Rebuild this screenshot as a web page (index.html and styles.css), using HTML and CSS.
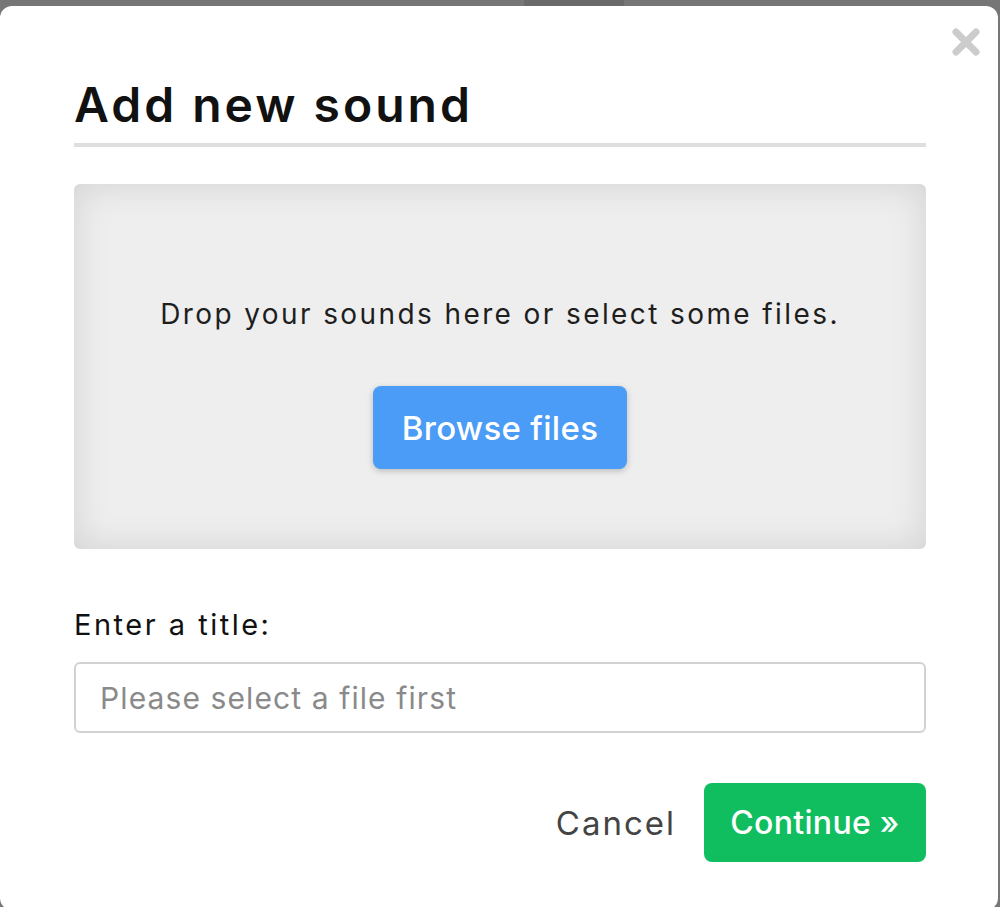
FILE: index.html
```html
<!DOCTYPE html>
<html lang="en">
<head>
<meta charset="utf-8">
<title>Add new sound</title>
<link rel="stylesheet" href="styles.css">
</head>
<body>
<div class="backdrop"><span class="backdrop-tab"></span></div>
<div class="modal">
  <button class="close" aria-label="Close">
    <svg width="34" height="32" viewBox="0 0 34 32"><path d="M7 6 L27 26 M27 6 L7 26" stroke="#cccccc" stroke-width="7" stroke-linecap="round"/></svg>
  </button>
  <h1 class="modal-title">Add new sound</h1>
  <div class="dropzone">
    <p class="drop-text">Drop your sounds here or select some files.</p>
    <button class="btn btn-browse">Browse files</button>
  </div>
  <label class="field-label" for="title">Enter a title:</label>
  <input class="field-input" id="title" type="text" placeholder="Please select a file first">
  <div class="actions">
    <button class="btn-cancel">Cancel</button>
    <button class="btn btn-continue">Continue »</button>
  </div>
</div>
</body>
</html>
```
FILE: styles.css
```css
html, body {
  margin: 0;
  padding: 0;
}
body {
  background: #767676;
  overflow: hidden;
  height: 907px;
  font-family: Inter, "Open Sans", sans-serif;
}
.backdrop {
  height: 6px;
  display: flex;
}
.backdrop-tab {
  margin-left: 524px;
  width: 100px;
  background: #6a6a6a;
}
.modal {
  position: relative;
  box-sizing: border-box;
  width: 998px;
  height: 904px;
  background: #fff;
  border-radius: 12px;
  padding: 0 72px 0 74px;
  overflow: hidden;
}
.close {
  position: absolute;
  top: 20px;
  right: 15px;
  border: 0;
  background: none;
  padding: 0;
  width: 34px;
  height: 32px;
}
.close svg { display: block; }
.modal-title {
  margin: 0;
  padding-top: 71px;
  padding-bottom: 10px;
  font-size: 48px;
  line-height: 56px;
  font-weight: 600;
  letter-spacing: 3px;
  color: #111;
  border-bottom: 4px solid #dedede;
}
.dropzone {
  margin-top: 37px;
  height: 365px;
  box-sizing: border-box;
  background: #eeeeee;
  border-radius: 6px;
  box-shadow: inset 0 0 36px rgba(0,0,0,0.12);
  padding-top: 110px;
  text-align: center;
}
.drop-text {
  margin: 0;
  font-size: 28px;
  line-height: 40px;
  letter-spacing: 2.4px;
  color: #1e1e1e;
}
.btn {
  border: 0;
  font-family: inherit;
  color: #fff;
  border-radius: 8px;
  cursor: pointer;
}
.btn-browse {
  margin-top: 52px;
  width: 254px;
  height: 83px;
  background: #4a9cf6;
  font-size: 33px;
  font-weight: 500;
  letter-spacing: 0.3px;
  box-shadow: 0 2px 6px rgba(0,0,0,0.22);
}
.field-label {
  display: block;
  margin-top: 56px;
  font-size: 29px;
  line-height: 40px;
  letter-spacing: 2.5px;
  color: #111;
}
.field-input {
  display: block;
  margin-top: 17px;
  box-sizing: border-box;
  width: 100%;
  height: 71px;
  border: 2px solid #d2d2d2;
  border-radius: 6px;
  padding: 0 24px;
  font-family: inherit;
  font-size: 30px;
  letter-spacing: 1.1px;
  color: #333;
  outline: none;
}
.field-input::placeholder {
  color: #8a8a8a;
}
.actions {
  display: flex;
  justify-content: flex-end;
  align-items: center;
  gap: 28px;
  margin-top: 50px;
}
.btn-cancel {
  border: 0;
  background: none;
  padding: 0;
  font-family: inherit;
  font-size: 33px;
  letter-spacing: 2px;
  color: #444;
}
.btn-continue {
  width: 222px;
  height: 79px;
  background: #10be60;
  font-size: 32px;
  font-weight: 500;
  letter-spacing: 0.3px;
}
```
